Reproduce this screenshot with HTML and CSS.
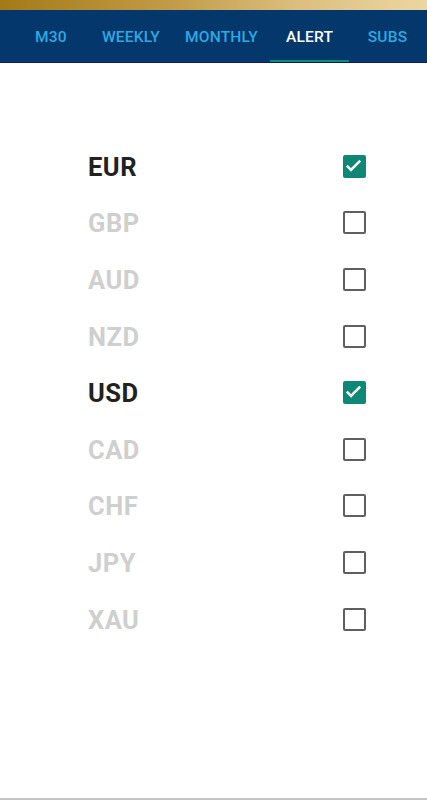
FILE: index.html
```html
<!DOCTYPE html>
<html>
<head>
<meta charset="utf-8">
<link rel="stylesheet" href="styles.css">
</head>
<body>
<div class="app">
  <div class="goldbar"></div>
  <nav class="tabs">
    <div class="tab tab-m30">M30</div>
    <div class="tab tab-weekly">WEEKLY</div>
    <div class="tab tab-monthly">MONTHLY</div>
    <div class="tab tab-alert active">ALERT</div>
    <div class="tab tab-subs">SUBS</div>
  </nav>
  <main class="list">
    <div class="row on"><span class="label">EUR</span><span class="box"><svg viewBox="0 0 24 24" width="23" height="23"><path d="M5 12.2l4.4 4.4 9.6-9.6" fill="none" stroke="#fff" stroke-width="2.6"/></svg></span></div>
    <div class="row"><span class="label">GBP</span><span class="box"></span></div>
    <div class="row"><span class="label">AUD</span><span class="box"></span></div>
    <div class="row"><span class="label">NZD</span><span class="box"></span></div>
    <div class="row on"><span class="label">USD</span><span class="box"><svg viewBox="0 0 24 24" width="23" height="23"><path d="M5 12.2l4.4 4.4 9.6-9.6" fill="none" stroke="#fff" stroke-width="2.6"/></svg></span></div>
    <div class="row"><span class="label">CAD</span><span class="box"></span></div>
    <div class="row"><span class="label">CHF</span><span class="box"></span></div>
    <div class="row"><span class="label">JPY</span><span class="box"></span></div>
    <div class="row"><span class="label">XAU</span><span class="box"></span></div>
  </main>
  <div class="bottomline"></div>
</div>
</body>
</html>
```
FILE: styles.css
```css
html, body {
  margin: 0;
  padding: 0;
  background: #fff;
}
.app {
  width: 427px;
  height: 800px;
  display: flex;
  flex-direction: column;
  font-family: Roboto, "Liberation Sans", sans-serif;
}
.goldbar {
  height: 10px;
  background: linear-gradient(90deg, #a47a18 0%, #c19b47 40%, #dcbf7f 70%, #ecd6a1 100%);
}
.tabs {
  height: 52px;
  background: #04376b;
  border-bottom: 1px solid #0b1e5a;
  display: flex;
  padding-left: 13px;
  box-sizing: content-box;
}
.tab {
  display: flex;
  align-items: center;
  justify-content: center;
  color: #2fa9e1;
  font-size: 15.5px;
  font-weight: 500;
  letter-spacing: 0.2px;
  box-sizing: border-box;
  padding-top: 4px;
  border-bottom: 2px solid transparent;
}
.tab-m30 { width: 76px; }
.tab-weekly { width: 84px; }
.tab-monthly { width: 97px; }
.tab-alert { width: 79px; }
.tab-subs { width: 77px; }
.tab.active {
  color: #fff;
  border-bottom-color: #0d8a79;
}
.list {
  flex: 1;
  padding: 75px 61px 0 88px;
  display: flex;
  flex-direction: column;
}
.row {
  height: 56.6px;
  display: flex;
  align-items: center;
  justify-content: space-between;
}
.label {
  font-size: 25.5px;
  font-weight: 700;
  letter-spacing: 0.5px;
  color: #cfcfcf;
  padding-top: 1px;
}
.row.on .label {
  color: #222;
}
.box {
  width: 23px;
  height: 23px;
  box-sizing: border-box;
  border: 2.7px solid #5f5f5f;
  border-radius: 2px;
  display: block;
  position: relative;
}
.box svg {
  position: absolute;
  left: -2.7px;
  top: -2.7px;
}
.row.on .box {
  background: #0f8775;
  border-color: #0f8775;
}
.bottomline {
  height: 2px;
  background: #c4c4c4;
}
```
